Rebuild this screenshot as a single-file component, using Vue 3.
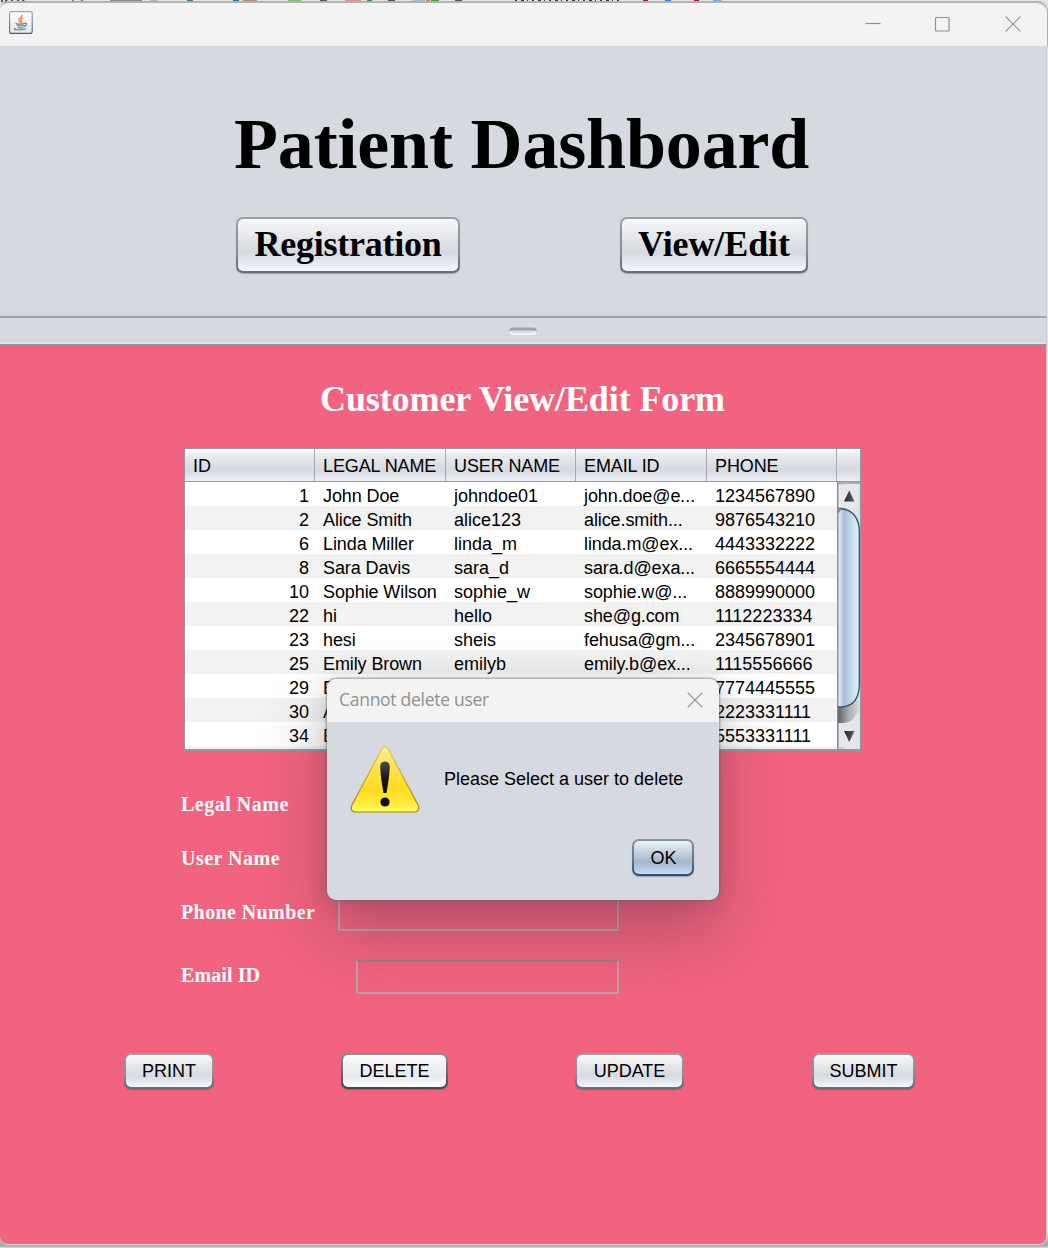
<script setup>
const columns = ['ID', 'LEGAL NAME', 'USER NAME', 'EMAIL ID', 'PHONE']

const rows = [
  ['1', 'John Doe', 'johndoe01', 'john.doe@e...', '1234567890'],
  ['2', 'Alice Smith', 'alice123', 'alice.smith...', '9876543210'],
  ['6', 'Linda Miller', 'linda_m', 'linda.m@ex...', '4443332222'],
  ['8', 'Sara Davis', 'sara_d', 'sara.d@exa...', '6665554444'],
  ['10', 'Sophie Wilson', 'sophie_w', 'sophie.w@...', '8889990000'],
  ['22', 'hi', 'hello', 'she@g.com', '1112223334'],
  ['23', 'hesi', 'sheis', 'fehusa@gm...', '2345678901'],
  ['25', 'Emily Brown', 'emilyb', 'emily.b@ex...', '1115556666'],
  ['29', 'E', '', '', '7774445555'],
  ['30', 'A', '', '', '2223331111'],
  ['34', 'E', '', '', '5553331111'],
  ['', '', '', '', ''],
]
</script>

<template>
  <div class="desktop">
    <svg class="backdrop" width="1048" height="4" viewBox="0 0 1048 4">
      <rect width="1048" height="4" fill="#e3e5e3" />
      <path d="M2 0v2M7 0l-2 2M12 0v2M18 0v2M24 0l-2 2" stroke="#333" stroke-width="1.6" />
      <path d="M72 0q5 4 11 0" fill="none" stroke="#555" />
      <rect x="110" width="32" height="3" fill="#8b8b8b" />
      <rect x="150" width="7" height="3" fill="#b4b4b4" />
      <rect x="187" width="6" height="2" fill="#3c6c94" />
      <rect x="233" width="6" height="2" fill="#3c6c94" />
      <rect x="243" width="14" height="3" fill="#b98a68" />
      <path d="M288 0h13l3 3h-16z" fill="#7cc36e" />
      <rect x="320" width="7" height="2" fill="#555" />
      <rect x="345" width="16" height="3" fill="#d68f80" />
      <rect x="367" width="5" height="3" fill="#3c8a3c" />
      <rect x="388" width="7" height="2" fill="#555" />
      <rect x="412" width="13" height="2" fill="#a9bfd0" />
      <rect x="426" width="4" height="3" fill="#e08040" />
      <rect x="431" width="8" height="3" fill="#3fa04a" />
      <rect x="455" width="7" height="2" fill="#555" />
      <rect x="500" y="1" width="70" height="2" fill="#4a90d4" />
      <path d="M515 1h108" stroke="#303840" stroke-width="2" stroke-dasharray="2 4 3 3 1 4" />
      <rect x="643" width="5" height="3" fill="#a91030" />
      <rect x="665" width="6" height="1" fill="#3c78e0" />
      <rect x="694" width="5" height="3" fill="#a91030" />
      <rect x="713" width="9" height="2" fill="#7ba6dc" />
    </svg>

    <div class="window">
      <div class="titlebar">
        <svg class="java" width="24" height="24" viewBox="0 0 24 24">
          <defs>
            <linearGradient id="iconBg" x2="0" y2="1">
              <stop offset="0" stop-color="#fff" />
              <stop offset="1" stop-color="#e3e6e9" />
            </linearGradient>
            <linearGradient id="iconEdge" x2="0" y2="1">
              <stop offset="0" stop-color="#93a6b6" />
              <stop offset="1" stop-color="#48617a" />
            </linearGradient>
          </defs>
          <rect x=".6" y=".6" width="22.6" height="21.8" rx="2" fill="url(#iconBg)" stroke="url(#iconEdge)" stroke-width="1.1" />
          <path d="M13.4 3.8c.8 2-4.3 3.2-3.6 5.4.3.9 1.4 1.7 1.8 2.6M14.2 7.2c-2.6.9-2.9 2-1.7 3.1.5.6.2 1.2-.3 1.6" fill="none" stroke="#f08030" stroke-width="1.3" />
          <path d="M7.6 12c-3 1.200 6 1.600 8.600.3M8 14.200c1.800.8 5.500.7 7.300 0M8.600 16.300c1.500.8 4.300.8 5.900 0M15.700 12.200c3.300-.5 2 2.700-.6 3.400M6.400 17.200c-4.500 1.500 6.600 2.400 10.600.5" fill="none" stroke="#5b7d98" stroke-width="1.100" />
        </svg>
        <div class="controls">
          <svg width="16" height="16" viewBox="0 0 16 16"><path d="M.5 7.500h15" /></svg>
          <svg width="16" height="16" viewBox="0 0 16 16"><rect x="1.500" y="1.500" width="13.500" height="13.500" rx="1" /></svg>
          <svg width="16" height="16" viewBox="0 0 16 16"><path d="M.7.7l14.600 14.600M15.300.7L.7 15.300" /></svg>
        </div>
      </div>

      <header class="top-panel">
        <h1>Patient Dashboard</h1>
        <nav>
          <button class="btn big registration">Registration</button>
          <button class="btn big view-edit">View/Edit</button>
        </nav>
      </header>

      <div class="divider">
        <svg width="28" height="9" viewBox="0 0 28 9">
          <rect x="1" y="1.500" width="26" height="6.500" rx="2.500" fill="#f1f2f4" />
          <path d="M.5 5V3.500Q.5.500 3.500.500h21q3 0 3 3V5q-1-1.200-3-1.200h-21Q1.500 3.800.5 5z" fill="#a2a5b0" />
          <path d="M3 3.800h22v2H3z" fill="#d6d9e0" />
        </svg>
      </div>

      <main class="form-panel">
        <h2>Customer View/Edit Form</h2>

        <section class="table">
          <div class="thead">
            <span v-for="c in columns" :key="c">{{ c }}</span>
            <i></i>
          </div>
          <div class="tbody">
            <div class="rows">
              <div v-for="(r, i) in rows" :key="i" class="row">
                <span v-for="(cell, j) in r" :key="j">{{ cell }}</span>
              </div>
            </div>
            <svg class="scrollbar" width="23" height="267" viewBox="0 0 23 267">
              <defs>
                <linearGradient id="track"><stop offset="0" stop-color="#bfc1c6" /><stop offset=".5" stop-color="#e9eaed" /><stop offset="1" stop-color="#dcdee3" /></linearGradient>
                <linearGradient id="thumb"><stop offset="0" stop-color="#e3eefa" /><stop offset=".2" stop-color="#c9dbef" /><stop offset=".27" stop-color="#a9bfd8" /><stop offset=".5" stop-color="#b7cde1" /><stop offset="1" stop-color="#e0f6fc" /></linearGradient>
                <linearGradient id="under"><stop offset="0" stop-color="#5a5a5c" /><stop offset=".5" stop-color="#aaabae" /><stop offset="1" stop-color="#dcdde0" /></linearGradient>
                <linearGradient id="arrow"><stop offset="0" stop-color="#222" /><stop offset="1" stop-color="#666" /></linearGradient>
              </defs>
              <rect width="23" height="267" fill="url(#track)" />
              <path d="M2 3h19v23H2z" fill="#e7e8eb" /><path d="M2 3v23" stroke="#f7f7f8" />
              <path d="M0 218h23v12q-4 2-7 7-3 4-10 4H0z" fill="url(#under)" />
              <path d="M2 241h6q8 0 14-12v36H2z" fill="#e5e6e9" />
              <path d="M0 26.500h4Q22.300 29 22.300 50V202q0 22-18 23H0z" fill="url(#thumb)" stroke="#34516c" stroke-width="1.300" />
              <path d="M0 26l5 1L0 33z" fill="#7891a8" />
              <path d="M.7 0v267" stroke="#898c92" stroke-width="1.400" />
              <path d="M1 1h22" stroke="#a9adb5" stroke-width="2" />
              <path d="M12.300 8.500L17.500 19.500H7z" fill="url(#arrow)" />
              <path d="M7 249h10.500L12.300 260z" fill="url(#arrow)" />
            </svg>
          </div>
        </section>

        <section class="fields">
          <label class="field legal">Legal Name<input /></label>
          <label class="field user">User Name<input /></label>
          <label class="field phone">Phone Number<input /></label>
          <label class="field email">Email ID<input /></label>
        </section>

        <footer class="actions">
          <button class="btn print">PRINT</button>
          <button class="btn delete">DELETE</button>
          <button class="btn update">UPDATE</button>
          <button class="btn submit">SUBMIT</button>
        </footer>
      </main>
    </div>

    <div class="dialog">
      <div class="dialog-title">
        <span>Cannot delete user</span>
        <svg width="16" height="16" viewBox="0 0 16 16"><path d="M.7.7l14.600 14.600M15.300.7L.7 15.300" /></svg>
      </div>
      <div class="dialog-body">
        <div class="message">
          <svg width="70" height="68" viewBox="0 0 70 68">
            <defs>
              <linearGradient id="warn" x2="0" y2="1"><stop offset="0" stop-color="#ffed93" /><stop offset=".35" stop-color="#ffe049" /><stop offset=".65" stop-color="#ffdb20" /><stop offset=".85" stop-color="#ffea38" /><stop offset="1" stop-color="#ffff5a" /></linearGradient>
              <linearGradient id="warnEdge" x2="0" y2="1"><stop offset="0" stop-color="#e2c650" /><stop offset="1" stop-color="#9c8410" /></linearGradient>
              <linearGradient id="mark" x2="0" y2="1"><stop offset="0" stop-color="#4b4b4b" /><stop offset=".6" stop-color="#111" /></linearGradient>
            </defs>
            <path d="M31.600 3.300Q35-1.300 38.400 3.300L68.300 59.500Q70 65.700 64.500 66H5.500Q0 65.700 1.700 59.500z" fill="url(#warn)" stroke="url(#warnEdge)" stroke-width="1.200" />
            <path d="M35 15.500c3.500 0 5 2.500 4.800 6-.3 8-2 18-3.300 25.500h-3C32.200 39.500 30.500 29.500 30.200 21.500 30 18 31.500 15.500 35 15.500z" fill="url(#mark)" />
            <circle cx="35" cy="56" r="4.600" fill="#111" />
          </svg>
          <p>Please Select a user to delete</p>
        </div>
        <button class="btn ok">OK</button>
      </div>
    </div>
  </div>
</template>

<style>
body {
  margin: 0;
  background: #e3e3e3;
}
</style>

<style scoped>
* {
  box-sizing: border-box;
}
.desktop {
  position: relative;
  width: 1048px;
  height: 1248px;
  overflow: hidden;
  background: linear-gradient(#e3e5e3 0 1230px, #a6a6a6 1244px, #ababab 1246px, #dedede 1248px);
  font-family: "Liberation Sans", Arial, sans-serif;
  font-size: 18px;
  color: #000;
}
.backdrop {
  position: absolute;
  top: 0;
  left: 0;
}
.window {
  position: relative;
  display: flex;
  flex-direction: column;
  width: 1048px;
  height: 1245px;
  padding-top: 1px;
}
.window > * {
  width: 1047px;
  border-right: 1px solid #c8ccd2;
}
.titlebar {
  width: 1048px;
  height: 45px;
  flex: none;
  display: flex;
  justify-content: space-between;
  align-items: flex-start;
  border-top: 2px solid #b2b2b2;
  border-right: 1px solid #b2b2b2;
  border-radius: 8px 11px 0 0;
  background: #f3f3f3;
  background-clip: padding-box;
  padding: 8px 26px 0 9px;
}
.controls {
  display: flex;
  gap: 53px;
  margin-top: 4.5px;
}
.controls svg:last-child {
  margin-left: 2px;
}
.controls svg,
.dialog-title svg {
  fill: none;
  stroke: #8f8f8f;
  stroke-width: 1.2;
}
.top-panel {
  height: 270px;
  flex: none;
  background: #d6d9e0;
  display: flex;
  flex-direction: column;
}
h1,
h2 {
  font-family: "Liberation Serif", "Times New Roman", serif;
  font-weight: bold;
  margin: 0;
  white-space: nowrap;
}
h1 {
  font-size: 72px;
  line-height: 80px;
  letter-spacing: -0.17px;
  margin: 58px 0 0 234px;
}
nav {
  display: flex;
  gap: 160px;
  margin: 33px 0 0 236px;
}
.btn {
  height: 36px;
  padding: 0;
  border: 2px solid transparent;
  border-radius: 7px;
  font: 18px "Liberation Sans", Arial, sans-serif;
  color: #000;
  white-space: nowrap;
  background:
    linear-gradient(#f6f7f9, #e2e4e8 40%, #d6d9df 65%, #e3e6ed 82%, #f5f8ff) padding-box,
    linear-gradient(#9c9fa5, #8b8e94 60%, #666a70) border-box;
  box-shadow: 0 1px 1px rgba(60, 60, 70, 0.35);
}
.big {
  height: 56px;
  padding-bottom: 2px;
  font: bold 36px "Liberation Serif", "Times New Roman", serif;
}
.registration {
  width: 224px;
  letter-spacing: -0.25px;
}
.view-edit {
  width: 188px;
  letter-spacing: -0.1px;
}
.divider {
  height: 29px;
  flex: none;
  display: flex;
  justify-content: center;
  padding-top: 9px;
  border-top: 2px solid #9fa2ad;
  border-bottom: 1px solid #8f9aa4;
  background: linear-gradient(#d6d9e1 0 14px, #d5d7dc 24px, #e6e9ec 25px);
}
.form-panel {
  flex: 1;
  background: #f2637f;
  border-bottom: 1px solid #d5d8dd;
  border-radius: 0 0 8px 8px;
}
h2 {
  color: #fff;
  font-size: 36px;
  line-height: 42px;
  letter-spacing: -0.1px;
  margin: 33px 0 0 320px;
}
.table {
  margin: 28px 0 0 184px;
  width: 677px;
  height: 303px;
  border: 1px solid #9297a1;
  border-bottom-width: 2px;
  background: #fff;
}
.thead {
  display: grid;
  grid-template-columns: 130px 131px 130px 131px 130px 23px;
  height: 33px;
  line-height: 34px;
  border-bottom: 1px solid #9297a1;
  background: linear-gradient(#fbfbfc, #e6e8ec 25%, #d6d9df 65%, #e2e5eb 85%, #eef1f8);
}
.thead span {
  height: 32px;
  padding-left: 8px;
  border-right: 1px solid #a5a9b2;
  white-space: nowrap;
  letter-spacing: -0.12px;
}
.tbody {
  display: flex;
  height: 267px;
  overflow: hidden;
}
.rows {
  width: 652px;
}
.scrollbar {
  flex: none;
}
.row {
  display: grid;
  grid-template-columns: 130px 131px 130px 131px 130px;
  height: 24px;
  line-height: 28px;
  white-space: nowrap;
}
.row:nth-child(even) {
  background: #f2f2f2;
}
.row span {
  padding-left: 8px;
}
.row span:nth-child(2),
.row span:nth-child(4) {
  letter-spacing: -0.1px;
}
.row span:first-child {
  padding: 0 6px 0 0;
  text-align: right;
}
.fields {
  margin: 36px 0 0 181px;
}
.field {
  display: flex;
  justify-content: space-between;
  align-items: center;
  width: 438px;
  height: 34px;
  margin-bottom: 20px;
  color: #fff;
  font: bold 20px "Liberation Serif", "Times New Roman", serif;
  letter-spacing: 0.5px;
}
.field input {
  width: 281px;
  height: 34px;
  margin: 4px 0 0;
  border: 2px solid #b9a3aa;
  border-top-color: #9b7d86;
  background: transparent;
}
.phone {
  margin-bottom: 29px;
  letter-spacing: 0.4px;
}
.email {
  letter-spacing: 0.1px;
}
.email input {
  width: 263px;
}
.actions {
  display: flex;
  margin: 61px 0 0 124px;
}
.print {
  width: 90px;
}
.delete {
  width: 107px;
  margin-left: 127px;
  background:
    linear-gradient(#fbfbfc, #eeeff3 40%, #e6e9f0 68%, #fff) padding-box,
    linear-gradient(#8c8f94, #66666b 60%, #45454a) border-box;
}
.update {
  width: 109px;
  margin-left: 127px;
}
.submit {
  width: 103px;
  margin-left: 128px;
}
.dialog {
  position: absolute;
  left: 327px;
  top: 679px;
  width: 392px;
  height: 221px;
  border-radius: 9px;
  background: #d6d9e0;
  box-shadow:
    0 0 0 1.5px rgba(100, 100, 100, 0.4),
    0 32px 68px rgba(40, 40, 50, 0.3),
    0 2px 21px rgba(40, 40, 50, 0.14);
}
.dialog-title {
  display: flex;
  justify-content: space-between;
  align-items: center;
  height: 43px;
  padding: 0 16px 2px 12px;
  border-radius: 9px 9px 0 0;
  background: #f3f3f3;
  color: #919191;
  font: 17.5px "Open Sans", "Noto Sans", sans-serif;
  letter-spacing: -0.28px;
}
.dialog-title span {
  padding-bottom: 1px;
}
.dialog-body {
  display: flex;
  flex-direction: column;
}
.message {
  display: flex;
  margin: 24px 0 0 23px;
  height: 68px;
}
.message p {
  margin: 0 0 0 24px;
  line-height: 66px;
  white-space: nowrap;
}
.ok {
  width: 62px;
  height: 37px;
  padding: 2px 0 0 1px;
  margin: 25px 25px 0 auto;
  background:
    linear-gradient(#eef2f6, #bccbd9 42%, #a3b8cc 62%, #b0c6dc 80%, #c8dff5) padding-box,
    linear-gradient(#7d93a8, #5a7590 60%, #2f4b66) border-box;
}
</style>
